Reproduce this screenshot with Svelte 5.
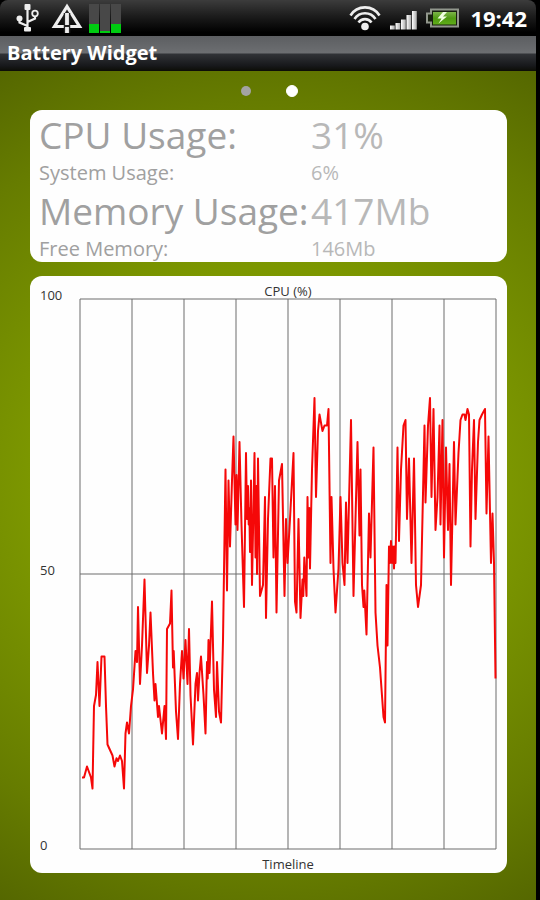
<script>
  const readings = [
    { label: 'CPU Usage:', value: '31%', large: true },
    { label: 'System Usage:', value: '6%', large: false },
    { label: 'Memory Usage:', value: '417Mb', large: true },
    { label: 'Free Memory:', value: '146Mb', large: false },
  ];

  const coreLoads = [9, 2, 9];

  // CPU samples as [time, percent]; the timeline is 416 units long.
  const samples = [
    [2, 13], [4, 13], [7, 15], [9, 14], [11, 13], [12.5, 11], [14, 26], [16, 28], [17.5, 34], [19.5, 26],
    [21.5, 35], [24.5, 35], [26, 26], [27.5, 19], [30, 18], [32.5, 17], [34.5, 15], [36.5, 16.5], [38, 16], [40, 17],
    [42, 16], [44, 11], [45.5, 21], [47, 23], [49, 21], [51, 26], [53, 29], [55.5, 36], [57, 34], [58, 44],
    [60, 30], [62, 37], [64.5, 49], [67, 32], [69, 37], [70.5, 43], [73, 32], [74.5, 27], [75.5, 30], [78, 24],
    [79, 26], [82, 21], [84.5, 26], [86, 20], [87, 40], [90, 41], [91.5, 47], [93, 33], [93.7, 36], [96, 25],
    [98, 20], [100, 30], [102, 36], [103.5, 31], [105.5, 38], [107.5, 30], [109, 40], [110.5, 28], [113, 19], [115.5, 30],
    [117, 32], [118, 27], [119.5, 32], [121, 35], [123.5, 28], [125.5, 21], [127, 34], [127.7, 31], [128.5, 38], [129.5, 32],
    [132, 45], [134, 29], [136, 24], [137, 34], [139, 25], [141, 23], [143, 38], [145.5, 69], [147, 47], [148.5, 67],
    [150, 55], [152, 67], [153.5, 75], [155.5, 59], [156.5, 68], [157.5, 58], [159.5, 74], [161.5, 59], [164, 44], [166, 72],
    [167, 60], [168, 66], [168.7, 59], [169.3, 62], [170, 54], [171, 67], [172, 48], [174.5, 72], [175.5, 53], [176.5, 66],
    [177, 50], [178, 71], [180, 46], [183, 48], [185, 64], [186, 42], [188, 60], [190.5, 71], [192, 71], [193.5, 53],
    [195, 66], [196.5, 43], [199, 67], [202, 70], [204.5, 46], [206, 60], [207.5, 52], [210, 60], [213.5, 72], [215, 45],
    [216.5, 43], [218.5, 60], [220.5, 42], [222.5, 49], [223.3, 46], [224.3, 53], [226.5, 46], [227.5, 64], [228.5, 53], [229.3, 62],
    [230, 51], [232, 69], [234.5, 82], [236, 64], [238, 76], [239.5, 79], [242.5, 76], [244.5, 77], [247, 77], [248.5, 80],
    [250.5, 52], [251.5, 64], [253.5, 51], [255.5, 43], [258.5, 51], [260.5, 64], [262.5, 52], [264.5, 48], [266, 63], [267.5, 52],
    [271, 78], [273.5, 46], [277.5, 74], [279.5, 57], [280.5, 69], [282, 48], [283.5, 44], [284.3, 47], [286.5, 39], [289, 61],
    [290.5, 53], [293.5, 73], [295.5, 43], [297.5, 37], [300, 33], [303.5, 24], [305, 23], [306.5, 48], [307.5, 37], [309, 55],
    [310, 52], [311, 56], [312, 52], [313, 55], [314, 51], [314.7, 55], [315.5, 52], [317.5, 73], [319, 56], [321, 69],
    [323.5, 77], [325.5, 78], [327, 60], [329, 71], [331.5, 52], [334, 71], [336, 48], [338, 44], [341, 48], [344.5, 77],
    [345.5, 63], [348, 77], [350, 82], [351.5, 64], [353.5, 80], [355.5, 58], [357.5, 64], [359.5, 77], [360.5, 59], [362.5, 78],
    [364, 53], [366, 73], [368, 58], [369.5, 70], [371, 48], [374, 74], [375.5, 59], [378.5, 72], [380.5, 78], [382.5, 79],
    [384.5, 79], [385.5, 78], [387.5, 80], [389, 79], [390.5, 55], [392, 69], [394, 78], [395.5, 60], [398, 74], [399.5, 78],
    [402, 79], [405, 80], [406.5, 61], [408.5, 75], [411, 52], [412.5, 61], [414, 52], [415.5, 31],
  ];

  const line = samples.map(([time, percent]) => `${time},${100 - percent}`).join(' ');
  const columns = [0, 1, 2, 3, 4, 5, 6, 7, 8];
</script>

<div class="screen">
  <header class="status">
    <div class="group">
      <svg class="usb" width="25" height="28" viewBox="0 0 25 28" aria-label="USB connected">
        <path d="M12.5 3V25M12.5 22L4.500 18.500V14.5M12.5 18L20 14.5V9" fill="none" stroke="#eee" stroke-width="2.2" />
        <rect x="9.5" y="0" width="6" height="6" rx="1" fill="#eee" />
        <circle cx="4.5" cy="14.5" r="3" fill="#eee" />
        <circle cx="20" cy="9.5" r="2.8" fill="#222" stroke="#eee" stroke-width="1.8" />
        <rect x="9" y="23" width="7" height="4.500" rx="1" fill="#eee" />
      </svg>
      <svg class="debug" width="32" height="30" viewBox="0 0 32 30" aria-label="Debugging">
        <path d="M16 3.5L3.5 23.5H28.5Z" fill="none" stroke="#eee" stroke-width="3.2" />
        <path d="M16 10V30" stroke="#222" stroke-width="6.500" />
        <path d="M16 10V22M16 24V30" stroke="#eee" stroke-width="3.800" />
      </svg>
      <div class="cores" aria-label="Core load">
        {#each coreLoads as load}
          <span><i style="height: {load}px"></i></span>
        {/each}
      </div>
    </div>
    <div class="group">
      <svg class="wifi" width="32" height="26" viewBox="0 0 32 26" aria-label="Wi-Fi">
        <g fill="none" stroke="#eee" stroke-width="2.6">
          <path d="M1.500 10.500A17 17 0 0 1 30.500 10.500" />
          <path d="M5.500 14A12.500 12.500 0 0 1 26.500 14" />
          <path d="M9.500 17.500A8 8 0 0 1 22.500 17.500" />
        </g>
        <circle cx="16" cy="21.500" r="3.8" fill="#eee" />
      </svg>
      <svg class="signal" width="28" height="20" viewBox="0 0 28 20" aria-label="Signal strength">
        <defs>
          <linearGradient id="bar"><stop offset="0" stop-color="#fff" /><stop offset="1" stop-color="#aaa" /></linearGradient>
        </defs>
        <g fill="url(#bar)">
          <rect x="0" y="15.500" width="4.800" height="4" />
          <rect x="5.500" y="13" width="4.800" height="6.500" />
          <rect x="11" y="9.500" width="4.800" height="10" />
          <rect x="16.500" y="5" width="4.800" height="14.500" />
          <rect x="22" y="1" width="4.800" height="18.500" />
        </g>
      </svg>
      <svg class="battery" width="35" height="20" viewBox="0 0 35 20" aria-label="Battery charging">
        <defs>
          <linearGradient id="cell" x2="0" y2="1"><stop offset="0" stop-color="#7db54a" /><stop offset=".5" stop-color="#4f9a12" /><stop offset="1" stop-color="#5fae18" /></linearGradient>
        </defs>
        <path d="M6 1.500H33V18.500H6V14.500H2V5.500H6Z" fill="#18200f" stroke="#92978d" stroke-width="2" />
        <rect x="8" y="4" width="23" height="12.500" fill="url(#cell)" />
        <path d="M18 4L12.500 10.500H16.500L13.500 15.500L22 8.500H18L22 4Z" fill="#efffe0" />
      </svg>
      <time>19:42</time>
    </div>
  </header>

  <h1>Battery Widget</h1>

  <main>
    <nav aria-label="Pages">
      <button aria-label="Battery page"></button>
      <button class="current" aria-label="CPU page" aria-current="page"></button>
    </nav>

    <dl class="card readings">
      {#each readings as { label, value, large }}
        <div class:large>
          <dt>{label}</dt>
          <dd>{value}</dd>
        </div>
      {/each}
    </dl>

    <figure class="card chart">
      <figcaption>CPU (%)</figcaption>
      <div class="scale"><span>100</span><span>50</span><span>0</span></div>
      <svg class="plot" viewBox="0 0 416 100" preserveAspectRatio="none" role="img" aria-label="CPU usage over time">
        <g class="grid">
          {#each columns as column}
            <path d="M{column * 52} 0V100" />
          {/each}
          <path d="M0 0H416M0 50H416M0 100H416" />
        </g>
        <polyline points={line} />
      </svg>
      <p>Timeline</p>
    </figure>
  </main>
</div>

<style>
  :global(body) {
    margin: 0;
    background: #000;
  }

  .screen {
    box-sizing: border-box;
    display: flex;
    flex-direction: column;
    min-height: 100vh;
    padding-right: 4px;
    font-family: 'Open Sans', 'Noto Sans', sans-serif;
  }

  .status {
    display: flex;
    justify-content: space-between;
    height: 36px;
    padding: 0 9px 0 15px;
    border-radius: 8px 8px 0 0;
    background: linear-gradient(#3c3c3c, #1c1c1c 45%, #000 90%);
    color: #fff;
  }

  .group {
    display: flex;
    align-items: center;
  }

  .debug {
    margin: 0 6px 0 11px;
  }

  .cores {
    display: flex;
    gap: 1px;
  }

  .cores span {
    display: flex;
    align-items: flex-end;
    width: 10px;
    height: 29px;
    background: #484848;
  }

  .cores i {
    width: 100%;
    background: #0c1;
  }

  .signal {
    margin: 4px 7px 0 9px;
  }

  .battery {
    margin-right: 10px;
  }

  time {
    font-size: 22px;
    font-weight: 700;
    line-height: 36px;
  }

  h1 {
    height: 35px;
    margin: 0;
    padding-left: 7px;
    background: linear-gradient(#5c5e61, #6c6e71 48%, #303236 52%, #17181b 85%, #0c0d06);
    color: #fff;
    font-size: 20px;
    font-weight: 700;
    line-height: 34px;
  }

  main {
    flex: 1;
    display: flex;
    flex-direction: column;
    padding: 0 29px 27px 30px;
    background: radial-gradient(ellipse 110% 66% at 50% 50%, #829f00, #7c9700 40%, #667c00 70%, #4a5a00);
  }

  nav {
    display: flex;
    align-items: center;
    justify-content: center;
    gap: 34px;
    height: 39px;
  }

  nav button {
    width: 12px;
    height: 12px;
    padding: 0;
    border: 1px solid transparent;
    border-radius: 50%;
    background: #a3a3a3 padding-box;
  }

  nav .current {
    border-color: #fff;
    background: #fff;
  }

  .card {
    margin: 0;
    border-radius: 12px;
    background: #fefefe;
  }

  .readings {
    overflow: hidden;
    margin-bottom: 14px;
    padding: 0 9px;
    font-size: 20px;
    line-height: 26px;
  }

  .readings div {
    display: grid;
    grid-template-columns: 272px 1fr;
  }

  .readings .large {
    font-size: 37px;
    line-height: 50px;
  }

  dt {
    color: #a0a0a0;
    white-space: nowrap;
  }

  dd {
    margin: 0;
    color: #b8b8b8;
  }

  .chart {
    flex: 1;
    display: grid;
    grid-template: 23px minmax(240px, 1fr) 24px / 50px 1fr 11px;
    color: #333;
    font-size: 13px;
    line-height: 16px;
  }

  figcaption,
  .chart p {
    grid-column: 2;
    margin: 0;
    padding-top: 7px;
    text-align: center;
  }

  .scale {
    grid-area: 2 / 1;
    display: flex;
    flex-direction: column;
    justify-content: space-between;
    margin: -12px 0 -4px;
    padding-left: 10px;
  }

  .plot {
    grid-area: 2 / 2;
    width: 100%;
    height: 100%;
    min-height: 0;
    overflow: visible;
  }

  .plot path,
  .plot polyline {
    fill: none;
    vector-effect: non-scaling-stroke;
  }

  .grid {
    stroke: #6c6c6c;
    stroke-width: 1px;
  }

  .plot polyline {
    stroke: #f50808;
    stroke-width: 2px;
    stroke-linejoin: round;
  }
</style>
